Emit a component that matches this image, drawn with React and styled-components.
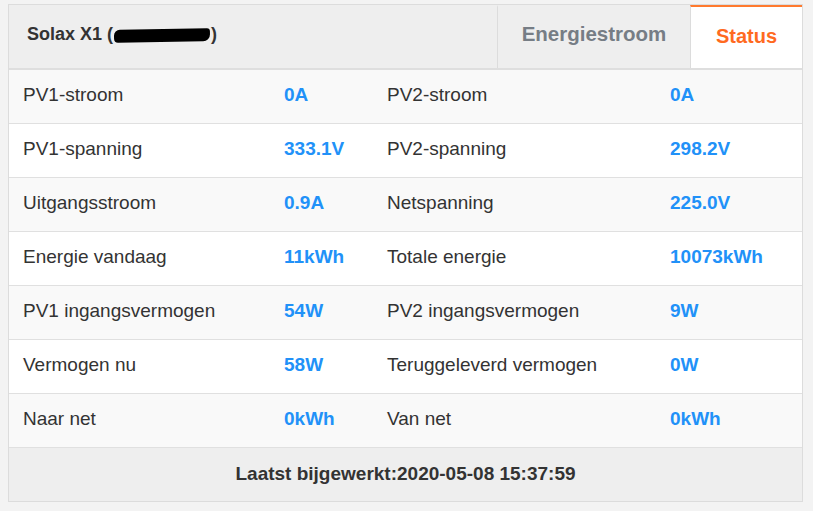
import React from "react";
import styled, { createGlobalStyle } from "styled-components";

const Global = createGlobalStyle`
  html, body { margin: 0; padding: 0; background: #f3f3f3; }
  body { padding: 4px 0 0 8px; font-family: "Liberation Sans", Arial, sans-serif; }
`;

const Panel = styled.div`
  width: 795px;
  box-sizing: border-box;
  border: 1px solid #dcdcdc;
  background: #fff;
`;

const Header = styled.div`
  display: flex;
  height: 63px;
  background: #eeeeee;
  border-bottom: 2px solid #dedede;
`;

const Title = styled.div`
  flex: 1;
  display: flex;
  align-items: center;
  padding: 0 0 4px 18px;
  font-size: 18px;
  font-weight: bold;
  color: #333;
`;

const Redacted = styled.span`
  display: inline-block;
  width: 96px;
  height: 13px;
  background: #000;
  border-radius: 6px 3px 7px 4px;
  margin: 0 1px;
  transform: translateY(1px) rotate(-1deg);
`;

const Tab = styled.div`
  display: flex;
  align-items: center;
  justify-content: center;
  box-sizing: border-box;
  width: ${p => p.$w}px;
  padding-bottom: ${p => (p.$active ? 3 : 8)}px;
  border-left: 1px solid #dcdcdc;
  border-top: 2px solid ${p => (p.$active ? "#ff7a2e" : "transparent")};
  background: ${p => (p.$active ? "#fff" : "transparent")};
  color: ${p => (p.$active ? "#ff6a1f" : "#767d85")};
  font-size: ${p => (p.$active ? 20 : 20.5)}px;
  font-weight: bold;
`;

const Row = styled.div`
  display: grid;
  grid-template-columns: 261px 103px 283px 1fr;
  align-items: center;
  height: 50px;
  padding-bottom: 3px;
  border-bottom: 1px solid #e0e0e0;
  background: ${p => (p.$odd ? "#f9f9f9" : "#ffffff")};
`;

const Label = styled.div`
  padding-left: 14px;
  font-size: 19px;
  color: #333;
`;

const Value = styled.div`
  padding-left: 14px;
  font-size: 19px;
  font-weight: bold;
  color: #2191f8;
`;

const Footer = styled.div`
  height: 51px;
  padding-bottom: 2px;
  display: flex;
  align-items: center;
  justify-content: center;
  background: #eeeeee;
  font-size: 19px;
  font-weight: bold;
  color: #333;
`;

const rows = [
  ["PV1-stroom", "0A", "PV2-stroom", "0A"],
  ["PV1-spanning", "333.1V", "PV2-spanning", "298.2V"],
  ["Uitgangsstroom", "0.9A", "Netspanning", "225.0V"],
  ["Energie vandaag", "11kWh", "Totale energie", "10073kWh"],
  ["PV1 ingangsvermogen", "54W", "PV2 ingangsvermogen", "9W"],
  ["Vermogen nu", "58W", "Teruggeleverd vermogen", "0W"],
  ["Naar net", "0kWh", "Van net", "0kWh"],
];

export default function App() {
  return (
    <>
      <Global />
      <Panel>
        <Header>
          <Title>
            Solax X1 (<Redacted />)
          </Title>
          <Tab $w={193}>Energiestroom</Tab>
          <Tab $w={112} $active>
            Status
          </Tab>
        </Header>
        {rows.map((r, i) => (
          <Row key={i} $odd={i % 2 === 0}>
            <Label>{r[0]}</Label>
            <Value>{r[1]}</Value>
            <Label>{r[2]}</Label>
            <Value>{r[3]}</Value>
          </Row>
        ))}
        <Footer>Laatst bijgewerkt:2020-05-08 15:37:59</Footer>
      </Panel>
    </>
  );
}
